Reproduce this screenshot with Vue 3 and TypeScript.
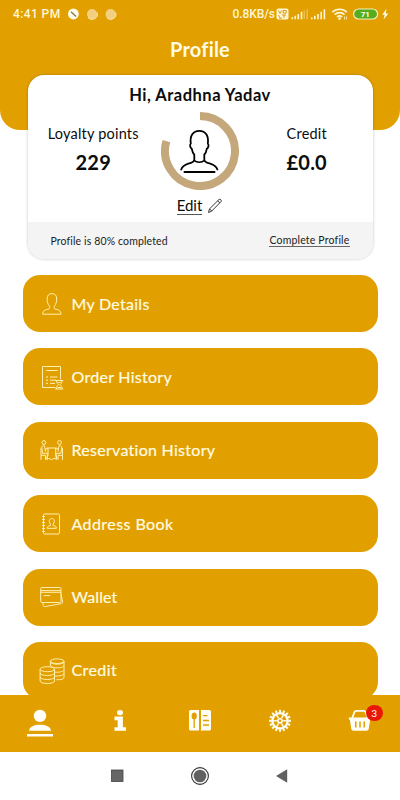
<script setup lang="ts">
type IconName = 'person' | 'orders' | 'table' | 'book' | 'wallet' | 'coins'

interface MenuItem {
  label: string
  icon: IconName
  spacing: string
}

const menu: MenuItem[] = [
  { label: 'My Details', icon: 'person', spacing: 'normal' },
  { label: 'Order History', icon: 'orders', spacing: 'normal' },
  { label: 'Reservation History', icon: 'table', spacing: 'normal' },
  { label: 'Address Book', icon: 'book', spacing: 'wide' },
  { label: 'Wallet', icon: 'wallet', spacing: 'tight' },
  { label: 'Credit', icon: 'coins', spacing: 'wide' },
]

const basketCount = 3
const completion = 80
const teeth = Array.from({ length: 16 }, (_, i) => i * 22.5)
const spokes = Array.from({ length: 6 }, (_, i) => i * 60)
</script>

<template>
  <div class="screen">
    <header class="top">
      <div class="status">
        <span class="time">4:41 PM</span>
        <svg class="notes" width="50" height="14" viewBox="0 0 50 14">
          <circle cx="5.400" cy="7" r="5.400" fill="#fffdf0" />
          <path d="M3 4.800L8 9.400" stroke="#8a7a40" stroke-width="1.400" />
          <circle cx="24" cy="7" r="5" fill="#f3cf80" />
          <path d="M20 10.400A5.200 5.200 0 0 0 29 5.500" fill="none" stroke="#fff0c4" stroke-width="1" />
          <circle cx="42.600" cy="7" r="5" fill="#f3cf80" />
          <path d="M38.600 10.400A5.200 5.200 0 0 0 47.600 5.500" fill="none" stroke="#fff0c4" stroke-width="1" />
        </svg>
        <span class="speed">0.8KB/s</span>
        <svg class="signals" width="116" height="16" viewBox="0 0 116 16">
          <rect x="0.500" y="2.500" width="12" height="11" rx="2" fill="#fff6d4" />
          <path d="M2.500 4.500l1.600 3 1.600-3M7.200 4.500h3v2.600h-3zM2.500 9l1.400 2.600M6 9h4M8 9v3M3 12.200h3" fill="none" stroke="#d99b12" stroke-width="1" />
          <g fill="#fff6d4">
            <path d="M15.500 11.200h1.600v2h-1.600zM18.500 9.800h1.600v3.400h-1.600zM21.500 8h1.600v5.200h-1.600zM24.700 5.800h1.600v7.400h-1.600z" />
            <path d="M27.500 4.500h1.600v8.700h-1.600zM30.500 3.200h1.500v10h-1.500z" opacity="0.350" />
            <path d="M35 11.400h1.600v1.800H35zM38 9.800h1.600v3.400H38zM41.200 8h1.600v5.200h-1.600zM44.400 5.800H46v7.400h-1.600zM47.600 3.300h1.600v9.900h-1.600z" />
          </g>
          <g fill="none" stroke="#fff6d4" stroke-width="1.700">
            <path d="M56.300 6.200a10.500 10.500 0 0 1 14.600 0" />
            <path d="M58.700 8.700a7 7 0 0 1 9.800 0" />
            <path d="M61 11a3.800 3.800 0 0 1 5.200 0" />
          </g>
          <circle cx="63.600" cy="12.600" r="1.300" fill="#fff6d4" />
          <path d="M68.500 10.500v3M70.500 10.500v3" stroke="#fff6d4" stroke-width="0.800" />
          <rect x="77.600" y="3" width="24" height="10" rx="5" fill="#55ad1d" stroke="#f3efbc" stroke-width="1.200" />
          <text x="89.300" y="11" text-anchor="middle" class="battery">71</text>
          <path d="M110.600 2.800L106.200 8.700h2.500l-1.100 4.700 4.700-6h-2.700z" fill="#fffdf0" />
        </svg>
      </div>
      <h1 class="title">Profile</h1>
    </header>

    <main class="content">
      <section class="card">
        <h2 class="greeting">Hi, Aradhna Yadav</h2>
        <div class="stats">
          <div class="stat points">
            <span class="stat-label">Loyalty points</span>
            <strong class="stat-value">229</strong>
          </div>
          <svg class="avatar" width="78" height="78" viewBox="0 0 78 78">
            <path d="M39 4A35 35 0 1 1 5.400 29.200" fill="none" stroke="#c5a77c" stroke-width="8" />
            <g fill="none" stroke="#000" stroke-linecap="round" stroke-linejoin="round">
              <path stroke-width="1.800" d="M20.200 57.500c1.200-3.600 4-5 7.900-6.100 3.200-.9 5.200-1.800 5.200-3.700v-5c-1.600-1.700-2.100-3.600-2.500-5.900-1.700-.8-2.300-4.200-1-5.200-1.100-7.800 2.200-12.800 8.500-12.800s9.600 5 8.500 12.800c1.300 1 .7 4.400-1 5.200-.4 2.300-.9 4.200-2.500 5.900v5c0 1.900 2 2.800 5.200 3.700 3.900 1.100 6.700 2.500 7.900 6.100" />
              <path stroke-width="1.500" d="M33.300 48.500c2.200 2.300 7.800 2.300 10 0" />
              <path stroke-width="2" d="M23.500 60h30" />
            </g>
          </svg>
          <div class="stat credit">
            <span class="stat-label">Credit</span>
            <strong class="stat-value">£0.0</strong>
          </div>
        </div>
        <div class="edit">
          <a class="edit-link">Edit</a>
          <svg width="16" height="16" viewBox="0 0 16 16" fill="none" stroke="#222" stroke-width="0.900">
            <path d="M1.500 14.500l1-3.600L12 1.500c1-.9 3.100.9 2.100 2L4.800 13zM10.700 2.800l2.200 2.200M2.500 10.900L4.800 13" />
          </svg>
        </div>
        <footer class="card-foot">
          <span class="progress">Profile is {{ completion }}% completed</span>
          <a class="complete">Complete Profile</a>
        </footer>
      </section>

      <nav class="menu">
        <a v-for="item in menu" :key="item.label" class="row">
          <svg class="row-icon" width="28" height="28" viewBox="0 0 28 28">
            <path v-if="item.icon === 'person'" d="M4.700 24.200H23c0-4.200-3.600-4.600-6.200-5.200-.7-.3-.8-1.200-.6-2.500 2-2.500 2.500-5 2.500-7.500 0-3.300-1.500-5.400-4.800-5.400S9.100 5.700 9.100 9c0 2.500.5 5 2.500 7.500.2 1.300.1 2.200-.6 2.500-2.700.6-6.300 1-6.300 5.200z" />
            <g v-else-if="item.icon === 'orders'">
              <path d="M17.500 24.500H4.500V3.500h18v13M8 7.500h11.500M8 14h2M12 14h7.500M8 17.200h2M12 17.200h6M8 20.400h2M12 20.400h5" />
              <path d="M17.200 17.500h8M17.200 26h8M18.500 17.500c0 2.800 1 3 2 4.200-1 1.200-2 1.500-2 4.300M24 17.500c0 2.800-1 3-2 4.200 1 1.200 2 1.500 2 4.300M19.500 24.500h3.500M20 19.500h2.500" />
            </g>
            <g v-else-if="item.icon === 'table'" transform="translate(0 0.800)">
              <circle cx="6" cy="5.700" r="1.900" />
              <circle cx="21.500" cy="5.700" r="1.900" />
              <path d="M3 11v7.500h4.500v4.500M7.500 14.800L6.500 9C4.500 8 3.500 9.500 4 12l.6 4.500h4.700V23M3 18.500V23M7 12h3M24.500 11v7.500H20v4.500M20 14.800L21 9c2-1 3 .5 2.500 3l-.6 4.500h-4.700V23M24.500 18.500V23M20.500 12h-3" />
              <path d="M8.800 11.200h10M10 11.200v7.300L8.300 22c1.200.8 2-.4 2.800-.4s1.200 1.200 2.400 1.200 1.500-1.200 2.500-1.200 1.800.6 2.900.2l-1.200-3.300v-7.300" />
            </g>
            <g v-else-if="item.icon === 'book'">
              <rect x="5.500" y="4" width="16" height="20" rx="1.200" />
              <path d="M4 6.500h3M4 9.500h3M4 12.500h3M4 15.500h3M4 18.500h3M4 21.500h3M9.200 18.300h9.200c0-2.400-1.800-2.300-3.300-2.800v-1.300c2.300-3 1.200-5.600-1.300-5.600s-3.600 2.600-1.300 5.600v1.300c-1.500.5-3.300.4-3.300 2.800z" />
            </g>
            <g v-else-if="item.icon === 'wallet'">
              <rect x="2.700" y="4.500" width="20.300" height="15" rx="1.200" />
              <path d="M2.700 7.600H23M2.700 9.300H23M5.800 12.600h6.500" />
              <path d="M4.800 19.500l.5 3c.2 1 .8 1.200 1.600 1.100l16.600-3c.8-.2 1.200-.8 1.100-1.500L23 10.500" />
            </g>
            <g v-else>
              <ellipse cx="19.200" cy="5.200" rx="6.800" ry="2.300" />
              <path d="M12.400 5.200v4.500M26 5.200v16.300c0 1.400-3 2.400-7.500 2.200M12.400 6c.8 2.900 12.800 2.900 13.600 0M17.800 11.800c4.600.3 8.200-.7 8.200-2.300M17 16.200c5 .3 9-.9 9-2.500M17 20c5 .3 9-.9 9-2.500M12.400 9.200c.6 1.500 2.500 2.400 5.400 2.600" />
              <ellipse cx="9.300" cy="13.200" rx="7.200" ry="2.500" />
              <path d="M2.100 13.200V25c0 3.300 14.400 3.300 14.400 0V13.200M2.100 17c0 3.300 14.400 3.300 14.400 0M2.100 21c0 3.300 14.400 3.300 14.400 0" />
            </g>
          </svg>
          <span class="row-label" :class="item.spacing">{{ item.label }}</span>
        </a>
      </nav>
    </main>

    <nav class="tabs">
      <a class="tab">
        <svg width="28" height="30" viewBox="0 0 28 30" fill="#fffef6">
          <circle cx="14" cy="8.900" r="6.200" />
          <path d="M3 23.800c.3-4.200 5.500-6 11-6s10.700 1.800 11 6z" />
          <rect x="1" y="27" width="26" height="2.500" />
        </svg>
      </a>
      <a class="tab">
        <svg width="28" height="30" viewBox="0 0 28 30" fill="#fffef6">
          <ellipse cx="14" cy="5.600" rx="3" ry="2.600" />
          <path d="M8.500 9.500h8.400v10.700h3.100v3.600H8.500v-3.600h3.200v-7H8.500z" />
        </svg>
      </a>
      <a class="tab">
        <svg width="28" height="30" viewBox="0 0 28 30" fill="#fffef6">
          <path d="M4.500 3H13v20.400H4.500A1.500 1.500 0 0 1 3 21.900V4.500A1.500 1.500 0 0 1 4.500 3zM15 3h8.500A1.500 1.500 0 0 1 25 4.500v17.400a1.500 1.500 0 0 1-1.500 1.500H16l-1 .7z" />
          <ellipse cx="8.200" cy="9" rx="2.600" ry="3.500" fill="#e2a000" />
          <path d="M8.200 10v11M17 8.700h4.500M17 13.500h6M17 18h6" stroke="#e2a000" stroke-width="1.300" />
        </svg>
      </a>
      <a class="tab">
        <svg width="28" height="30" viewBox="0 0 28 30" fill="none" stroke="#fffef6">
          <g transform="translate(14 13.800)">
            <circle r="7.700" stroke-width="2.300" />
            <circle r="2.100" stroke-width="1.600" />
            <path v-for="a in spokes" :key="'s' + a" d="M0-3V-7.500" stroke-width="1.400" :transform="`rotate(${a + 30})`" />
            <path v-for="a in teeth" :key="'t' + a" d="M0-8.500V-11" stroke-width="2" :transform="`rotate(${a})`" />
          </g>
        </svg>
      </a>
      <a class="tab">
        <svg width="28" height="30" viewBox="0 0 28 30">
          <path d="M6 11.500L8.500 5Q9 3.800 10.300 3.800h7.400Q19 3.800 19.500 5L22 11.500" fill="none" stroke="#fffef6" stroke-width="1.800" />
          <path d="M3.500 10.500h21q1 0 .8 1.100-.2 1.200-1.200 1.400l-1.400 9q-.3 1.800-2.200 1.800h-13q-1.900 0-2.200-1.800L3.900 13q-1-.2-1.200-1.400-.2-1.100.8-1.100z" fill="#fffef6" />
          <path d="M9.800 14.500v6M14 14.500v6M18.200 14.500v6" stroke="#e2a000" stroke-width="1.500" />
        </svg>
        <span class="badge">{{ basketCount }}</span>
      </a>
    </nav>

    <div class="system">
      <svg width="186" height="20" viewBox="0 0 186 20">
        <rect x="4.500" y="4" width="11.500" height="11.500" fill="#666" stroke="#444" stroke-width="0.800" />
        <circle cx="93" cy="10" r="8.400" fill="#fff" stroke="#333" stroke-width="1.100" />
        <circle cx="93" cy="10" r="6.300" fill="#616161" />
        <path d="M169 10l11.200-6.700v13.400z" fill="#616161" />
      </svg>
    </div>
  </div>
</template>

<style>
body {
  margin: 0;
  background: #fff;
}
</style>

<style scoped>
.screen {
  width: 400px;
  height: 800px;
  display: flex;
  flex-direction: column;
  overflow: hidden;
  background: #fff;
  color: #0c0c0c;
  font-family: Lato, "Noto Sans", sans-serif;
  font-variant-ligatures: none;
}
.top {
  flex: none;
  height: 130px;
  box-sizing: border-box;
  border-radius: 0 0 20px 20px;
  background: #e2a000;
}
.status {
  display: flex;
  align-items: center;
  height: 28px;
  padding-left: 13px;
  color: #fff6d4;
  font: 500 12px/28px Roboto, sans-serif;
}
.time {
  width: 55px;
  letter-spacing: 0.400px;
  white-space: nowrap;
}
.speed {
  width: 43px;
  margin-left: 114.500px;
  letter-spacing: -0.100px;
  white-space: nowrap;
}
.battery {
  font: 700 8px Roboto, sans-serif;
  fill: #fff;
}
.title {
  margin: 7px 0 0;
  color: #fffbe6;
  font-size: 20px;
  line-height: 28px;
  font-weight: 700;
  text-align: center;
  letter-spacing: 0.200px;
}
.content {
  flex: 1;
  min-height: 0;
  overflow: hidden;
  margin-top: -60px;
  padding: 5px 22.500px 0;
}
.card {
  height: 184px;
  margin: 0 5px;
  display: flex;
  flex-direction: column;
  overflow: hidden;
  border-radius: 16px;
  background: #fff;
  box-shadow: 0 0 3px rgba(0, 0, 0, 0.25);
}
.greeting {
  margin: 8px 0 0;
  font-size: 16.500px;
  line-height: 24px;
  font-weight: 700;
  text-align: center;
  letter-spacing: 0.500px;
}
.stats {
  display: grid;
  grid-template-columns: 1fr 78px 1fr;
  margin-top: 5px;
}
.stat {
  display: flex;
  flex-direction: column;
  align-items: center;
  padding-top: 11.500px;
}
.points {
  padding-right: 2px;
}
.credit {
  padding-left: 2px;
}
.stat-label {
  font-size: 14.500px;
  line-height: 20px;
  letter-spacing: 0.200px;
}
.stat-value {
  margin-top: 5px;
  font-size: 20px;
  line-height: 26px;
  font-weight: 700;
  letter-spacing: 0.200px;
}
.edit {
  display: flex;
  justify-content: center;
  align-items: center;
  gap: 5px;
  height: 32px;
}
.edit-link {
  font-size: 15px;
  line-height: 17px;
  border-bottom: 1px solid #555;
}
.card-foot {
  flex: 1;
  display: flex;
  align-items: center;
  justify-content: space-between;
  padding: 0 23px;
  background: #f4f4f4;
  font-size: 10.500px;
  letter-spacing: 0.130px;
  color: #222;
}
.complete {
  line-height: 12px;
  letter-spacing: 0.180px;
  border-bottom: 1px solid #666;
}
.menu {
  display: flex;
  flex-direction: column;
  gap: 16.400px;
  padding-top: 16px;
}
.row {
  flex: none;
  height: 57px;
  display: flex;
  align-items: center;
  border-radius: 17px;
  background: #e2a000;
}
.row-icon {
  flex: none;
  margin-left: 15px;
  fill: none;
  stroke: #fff0b0;
  stroke-width: 1;
}
.row-label {
  margin-left: 6px;
  color: #fffbe2;
  font-size: 16px;
  line-height: 24px;
  white-space: nowrap;
  -webkit-text-stroke: 0.200px #fffbe2;
}
.normal {
  letter-spacing: 0.280px;
}
.wide {
  letter-spacing: 0.430px;
}
.tight {
  letter-spacing: 0.100px;
}
.tabs {
  flex: none;
  height: 57px;
  display: grid;
  grid-template-columns: repeat(5, 80px);
  background: #e2a000;
}
.tab {
  position: relative;
  display: flex;
  justify-content: center;
  padding-top: 12px;
}
.badge {
  position: absolute;
  top: 9.500px;
  left: 46px;
  width: 16.500px;
  height: 16.500px;
  border-radius: 50%;
  background: #e81708;
  color: #fff;
  font: 10px/16.500px Lato, sans-serif;
  text-align: center;
}
.system {
  flex: none;
  height: 48px;
  display: flex;
  align-items: center;
  padding-left: 107px;
  background: #fff;
}
</style>
